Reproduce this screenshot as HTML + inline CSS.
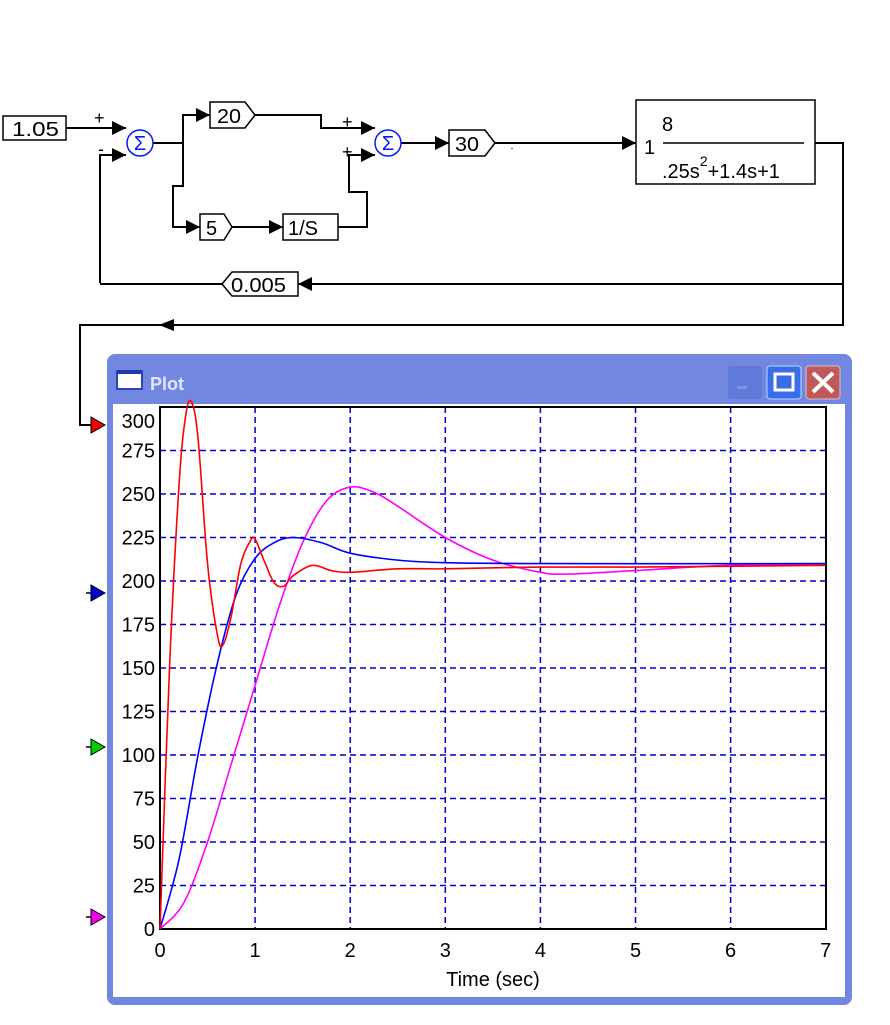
<!DOCTYPE html>
<html><head><meta charset="utf-8"><style>
html,body{margin:0;padding:0;background:#fff;width:890px;height:1025px;overflow:hidden}
svg{display:block;font-family:"Liberation Sans",sans-serif}
</style></head><body>
<svg id="s" width="890" height="1025" viewBox="0 0 890 1025" xmlns="http://www.w3.org/2000/svg">
<defs>
<marker id="a" viewBox="0 0 10 10" refX="10" refY="5" markerWidth="14" markerHeight="14" markerUnits="userSpaceOnUse" orient="auto"><path d="M0,0L10,5L0,10z" fill="#000"/></marker>
</defs>
<g stroke="#000" stroke-width="2" fill="none">
<path d="M66,128H126" marker-end="url(#a)"/>
<path d="M100,283V155H126" marker-end="url(#a)"/>
<path d="M153,143H183V115H210" marker-end="url(#a)"/>
<path d="M183,143V186H173V227H200" marker-end="url(#a)"/>
<path d="M232,227H283" marker-end="url(#a)"/>
<path d="M255,115H321V128H375" marker-end="url(#a)"/>
<path d="M338,227H367V192H349V155H375" marker-end="url(#a)"/>
<path d="M401,143H449" marker-end="url(#a)"/>
<path d="M495,143H636" marker-end="url(#a)"/>
<path d="M815,143H843V325H175"/>
<path d="M843,284H298" marker-end="url(#a)"/>
<path d="M222,284H100"/>
<path d="M175,325H80V425H96"/>
</g>
<path d="M160,319L175,325L160,331z" transform="rotate(180 167 325)" fill="#000"/>
<g stroke="#000" stroke-width="1.5" fill="#fff">
<rect x="3" y="116" width="63" height="24"/>
<path d="M210,102H245L255,115L245,128H210z"/>
<path d="M449,130H485L495,143L485,156H449z"/>
<path d="M200,214H224L232,227L224,240H200z"/>
<rect x="283" y="214" width="55" height="26"/>
<path d="M232,272H298V296H232L222,284z"/>
<rect x="636" y="100" width="179" height="84"/>
<path d="M663,143H804" fill="none"/>
</g>
<g fill="none" stroke="#0018ff" stroke-width="1.5">
<circle cx="140" cy="143" r="13"/><circle cx="388" cy="143" r="13"/>
</g>
<g font-size="20" fill="#0018ff" text-anchor="middle"><text x="140" y="150">Σ</text><text x="388" y="150">Σ</text></g>
<g font-size="20" fill="#000">
<text x="12" y="136" textLength="47" lengthAdjust="spacingAndGlyphs">1.05</text>
<text x="217" y="123" textLength="24" lengthAdjust="spacingAndGlyphs">20</text>
<text x="455" y="151" textLength="24" lengthAdjust="spacingAndGlyphs">30</text>
<text x="206" y="235">5</text>
<text x="288" y="235" textLength="30" lengthAdjust="spacingAndGlyphs">1/S</text>
<text x="231" y="292" textLength="55" lengthAdjust="spacingAndGlyphs">0.005</text>
<text x="644" y="154">1</text>
<text x="662" y="131">8</text>
<text x="662" y="178">.25s<tspan dy="-12" font-size="14">2</tspan><tspan dy="12">+1.4s+1</tspan></text>
<text x="94" y="124" font-size="18">+</text>
<text x="98" y="155" font-size="18">-</text>
<text x="342" y="128" font-size="18">+</text>
<text x="342" y="158" font-size="18">+</text>
</g>
<rect x="511" y="148" width="2" height="1" fill="#0a0"/>
<rect x="107" y="354" width="745" height="651" rx="8" fill="#7187e0"/>
<rect x="113" y="404" width="732" height="593" fill="#fff"/>
<rect x="117" y="371" width="25" height="18" fill="#fff" stroke="#2a48b0" stroke-width="2"/>
<rect x="117" y="370" width="25" height="4" fill="#1c3cb0"/>
<text x="150" y="390" font-size="18" font-weight="bold" fill="#dfe6ff">Plot</text>
<rect x="728" y="366" width="34" height="33" rx="3" fill="#5f7ad8"/>
<rect x="737" y="386" width="10" height="3" fill="#7f95e0"/>
<rect x="767" y="366" width="34" height="33" rx="3" fill="#3a6ee8" stroke="#c8d4ff"/>
<rect x="775" y="374" width="18" height="16" fill="none" stroke="#fff" stroke-width="3"/>
<rect x="806" y="366" width="34" height="33" rx="3" fill="#c05a5a" stroke="#e0c0c0"/>
<path d="M813,373L833,392M833,373L813,392" stroke="#fff" stroke-width="4"/>
<g id="grid" stroke="#0000cc" stroke-width="1.5" stroke-dasharray="6,4"></g>
<rect x="160" y="407" width="666" height="522" fill="none" stroke="#000" stroke-width="2"/>
<g id="curves" fill="none" stroke-width="1.6"></g>
<g id="labels" font-size="20" fill="#000"></g>
<text x="493" y="986" font-size="20" text-anchor="middle">Time (sec)</text>
<g stroke="#000" stroke-width="1.5">
<path d="M86,593H92M86,747H92M86,917H92"/>
</g>
<path d="M91,417L105,425L91,433z" fill="#e00" stroke="#000"/>
<path d="M91,585L105,593L91,601z" fill="#00c" stroke="#000"/>
<path d="M91,739L105,747L91,755z" fill="#0c0" stroke="#000"/>
<path d="M91,909L105,917L91,925z" fill="#e0e" stroke="#000"/>
</svg>
<script>
function X(t){return 160+95.1*t}function Y(v){return 929-v*1.74}
var h='';
for(var i=1;i<7;i++){h+='<line x1="'+X(i)+'" y1="407" x2="'+X(i)+'" y2="929"/>';}
for(var v=25;v<300;v+=25){h+='<line x1="160" y1="'+Y(v)+'" x2="826" y2="'+Y(v)+'"/>';}
document.getElementById('grid').innerHTML=h;
var L='';
for(var v=0;v<=300;v+=25){var y=v==300?428:Y(v)+7;L+='<text x="155" text-anchor="end" y="'+y+'">'+v+'</text>';}
for(var i=0;i<=7;i++){L+='<text x="'+X(i)+'" text-anchor="middle" y="957">'+i+'</text>';}
document.getElementById('labels').innerHTML=L;
function path(pts,col){
 var p=pts.map(function(q){return[X(q[0]),Y(q[1])]});
 var d='M'+p[0][0]+','+p[0][1];
 for(var i=0;i<p.length-1;i++){
  var p0=p[i-1]||p[i],p1=p[i],p2=p[i+1],p3=p[i+2]||p2;
  var c1=[p1[0]+(p2[0]-p0[0])/6,p1[1]+(p2[1]-p0[1])/6],c2=[p2[0]-(p3[0]-p1[0])/6,p2[1]-(p3[1]-p1[1])/6];
  d+='C'+c1+' '+c2+' '+p2;
 }
 return '<path d="'+d+'" stroke="'+col+'"/>';
}
var mag=[[0,0],[0.25,15],[0.5,50],[0.75,95],[1,140],[1.25,185],[1.5,222],[1.75,246],[2,254],[2.25,251],[2.5,243],[3,225],[3.5,212],[4,205],[4.3,204],[5,206],[6,209],[7,209]];
var blue=[[0,0],[0.2,40],[0.4,100],[0.6,152],[0.8,192],[1,213],[1.2,222],[1.4,225],[1.7,222],[2,216],[2.5,212],[3,210.5],[4,210],[7,210]];
var red=[[0,0],[0.1,150],[0.2,255],[0.27,295],[0.33,303],[0.4,282],[0.5,210],[0.6,170],[0.66,163],[0.75,180],[0.85,210],[0.95,223],[1.0,224],[1.1,211],[1.2,199],[1.3,197],[1.4,203],[1.6,209],[1.8,206],[2.0,205],[2.5,207],[3,207],[4,208],[5,208],[7,209]];
document.getElementById('curves').innerHTML=path(mag,'#f0f')+path(blue,'#00f')+path(red,'#f00');
</script>
</body></html>
